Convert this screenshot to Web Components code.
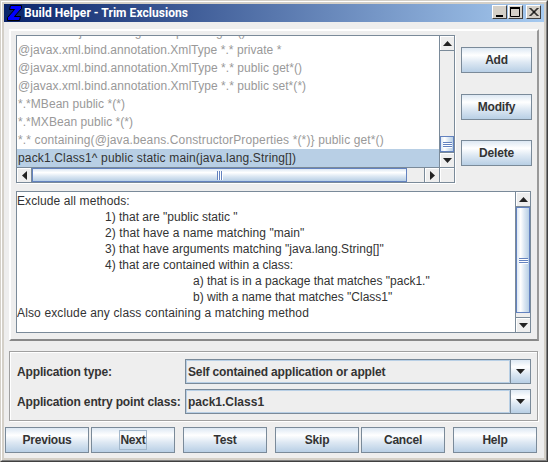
<!DOCTYPE html>
<html>
<head>
<meta charset="utf-8">
<title>Build Helper - Trim Exclusions</title>
<style>
html, body { margin: 0; padding: 0; background: #d4d0c8; }
</style>
</head>
<body>
<app-window>
  <title-bar slot="title">Build Helper - Trim Exclusions</title-bar>

  <upper-panel>
    <list-pane slot="list">
      <list-row dim>*.* extends javax.swing.JComponent get*()</list-row>
      <list-row dim style="letter-spacing:.05px">@javax.xml.bind.annotation.XmlType *.* private *</list-row>
      <list-row dim style="letter-spacing:.06px">@javax.xml.bind.annotation.XmlType *.* public get*()</list-row>
      <list-row dim style="letter-spacing:.06px">@javax.xml.bind.annotation.XmlType *.* public set*(*)</list-row>
      <list-row dim style="letter-spacing:.05px">*.*MBean public *(*)</list-row>
      <list-row dim style="letter-spacing:.05px">*.*MXBean public *(*)</list-row>
      <list-row dim style="letter-spacing:.13px">*.* containing(@java.beans.ConstructorProperties *(*)} public get*()</list-row>
      <list-row selected style="letter-spacing:.15px">pack1.Class1^ public static main(java.lang.String[])</list-row>
    </list-pane>
    <metal-button slot="side" style="margin-top:12px">Add</metal-button>
    <metal-button slot="side" style="margin-top:21px">Modify</metal-button>
    <metal-button slot="side" style="margin-top:20px">Delete</metal-button>
    <text-pane slot="text">
      <text-line style="letter-spacing:.1px">Exclude all methods:</text-line>
      <text-line indent="1">1) that are "public static "</text-line>
      <text-line indent="1" style="letter-spacing:.08px">2) that have a name matching "main"</text-line>
      <text-line indent="1" style="letter-spacing:.04px">3) that have arguments matching "java.lang.String[]"</text-line>
      <text-line indent="1">4) that are contained within a class:</text-line>
      <text-line indent="2">a) that is in a package that matches "pack1."</text-line>
      <text-line indent="2">b) with a name that matches "Class1"</text-line>
      <text-line style="letter-spacing:.14px">Also exclude any class containing a matching method</text-line>
    </text-pane>
  </upper-panel>

  <lower-panel>
    <span slot="l1">Application type:</span>
    <combo-box slot="c1">Self contained application or applet</combo-box>
    <span slot="l2">Application entry point class:</span>
    <combo-box slot="c2" style="letter-spacing:0">pack1.Class1</combo-box>
  </lower-panel>

  <button-row>
    <metal-button wide>Previous</metal-button>
    <metal-button wide focused style="margin-left:2px">Next</metal-button>
    <metal-button wide style="margin-left:8px">Test</metal-button>
    <metal-button wide style="margin-left:8px">Skip</metal-button>
    <metal-button wide style="margin-left:2px">Cancel</metal-button>
    <metal-button wide style="margin-left:8px">Help</metal-button>
  </button-row>
</app-window>

<script>
const FONT = '"Liberation Sans", Arial, sans-serif';

function makeEl(name, html) {
  var t = document.createElement("template");
  t.innerHTML = html;
  customElements.define(name, class extends HTMLElement {
    constructor() {
      super();
      this.attachShadow({ mode: "open" });
      this.shadowRoot.appendChild(t.content.cloneNode(true));
    }
  });
}

//outer frame
makeEl("app-window", `
<style>
:host { display: block; width: 548px; height: 462px; box-sizing: border-box; font-family: ${FONT}; font-size: 12px; color: #333;
  border: 1px solid; border-color: #d4d0c8 #404040 #404040 #d4d0c8; overflow: hidden; }
.in { height: 100%; box-sizing: border-box; border: 1px solid; border-color: #fff #808080 #808080 #fff; padding: 2px; background: #d4d0c8; display: flex; flex-direction: column; }
.body { flex: 1; background: #eee; display: flex; flex-direction: column; }
</style>
<div class="in"><slot name="title"></slot><div class="body"><slot></slot></div></div>`);

//title bar with logo and window buttons
makeEl("title-bar", `
<style>
:host { display: flex; align-items: center; height: 18px; flex: none; background: linear-gradient(90deg, #0a246a, #a6caf0); color: #fff; font: bold 12px Roboto, sans-serif; letter-spacing: .05px; }
svg.logo { margin: 0 2px 0 3px; flex: none; }
.t { flex: 1; white-space: nowrap; }
.b { width: 15px; height: 14px; box-sizing: border-box; background: #d4d0c8; border: 1px solid; border-color: #fff #404040 #404040 #fff; display: flex; flex: none; margin-top: -2px; }
.b svg { display: block; }
</style>
<svg class="logo" width="15" height="16" viewBox="0 0 15 16"><path d="M3.500 .5H14.500V3.500L7.500 11.500H13.500L12.500 15.500H.5V12.500L7.500 4.500H2.500Z" fill="#0000ff" stroke="#000"/></svg>
<span class="t"><slot></slot></span>
<span class="b"><svg width="13" height="12"><rect x="3" y="9" width="7" height="2" fill="#000"/></svg></span>
<span class="b" style="margin-left:1px"><svg width="13" height="12"><path d="M1.500 1.500H10.500V10.500H1.500Z" fill="none" stroke="#000"/><rect x="1" y="1" width="10" height="2" fill="#000"/></svg></span>
<span class="b" style="margin-left:3px;margin-right:3px"><svg width="13" height="12"><path d="M2.500 2L10.500 10M3.500 2L11.500 10M10.500 2L2.500 10M11.500 2L3.500 10" stroke="#000" fill="none"/></svg></span>`);

//raised panel holding list, side buttons and description
makeEl("upper-panel", `
<style>
:host { display: block; margin: 7px 0 0 5px; width: 530px; height: 312px; box-sizing: border-box; border: 2px solid; border-color: #fff #999 #888 #fff; padding: 4px 0 0 5px; }
.top { display: flex; }
.side { display: flex; flex-direction: column; margin-left: 6px; }
.text { margin-top: 8px; }
</style>
<div class="top"><slot name="list"></slot><div class="side"><slot name="side"></slot></div></div>
<div class="text"><slot name="text"></slot></div>`);

//Ocean style push button
makeEl("metal-button", `
<style>
:host { display: flex; align-items: center; justify-content: center; box-sizing: border-box; width: 71px; height: 26px; flex: none; border: 1px solid #7a8a99;
  background: linear-gradient(#dde8f3, #fff 30%, #dde8f3 60%, #b8cfe5); font: bold 12px ${FONT}; color: #333; letter-spacing: -.2px; }
:host([wide]) { width: 84px; }
span { padding: 2px 0; border: 1px solid transparent; line-height: 14px; }
:host([focused]) span { border-color: #a3b8cc; }
</style>
<span><slot></slot></span>`);

//scroll bar: sizes of the part before the thumb, and the thumb
class ScrollBar extends HTMLElement {
  constructor() {
    super();
    this.attachShadow({ mode: "open" });
  }
  connectedCallback() {
    var v = this.getAttribute("orient") == "v";
    var before = this.getAttribute("before");
    var size = this.getAttribute("size");
    this.shadowRoot.innerHTML = `
<style>
:host { display: flex; flex: none; box-sizing: border-box; flex-direction: ${v ? "column" : "row"}; background: #eee; ${v ? "width:15px" : "height:15px"}; }
.end { display: flex; align-items: center; justify-content: center; flex: none; box-sizing: border-box; ${v ? "height:15px" : "width:15px"}; background: #eee; box-shadow: inset 1px 1px #fff; }
.end svg { display: block; }
.a { ${v ? "border-bottom" : "border-right"}: 1px solid #7a8a99; }
.z { ${v ? "border-top" : "border-left"}: 1px solid #7a8a99; }
.gap1 { flex: none; ${v ? "height" : "width"}: ${before}px; }
.gap2 { flex: 1; }
.thumb { flex: none; box-sizing: border-box; ${v ? "height" : "width"}: ${size}px; border: 1px solid #6382bf; display: flex; align-items: center; justify-content: center; gap: 1px; flex-direction: ${v ? "column" : "row"};
  background: linear-gradient(${v ? "90deg, " : ""}#dde8f3, #fff 30%, #dde8f3 60%, #b8cfe5); }
i { display: block; flex: none; background: #6382bf; box-shadow: ${v ? "0 1px #fff" : "1px 0 #fff"}; ${v ? "width:9px;height:1px" : "width:1px;height:9px"}; }
</style>
<div class="end a"><svg width="9" height="9"><path d="${v ? "M4.500 2L9 7H0Z" : "M2 4.500L7 0V9Z"}" fill="#222"/></svg></div>
<div class="gap1"></div>
<div class="thumb"><i></i><i></i><i></i></div>
<div class="gap2"></div>
<div class="end z"><svg width="9" height="9"><path d="${v ? "M0 2H9L4.500 7Z" : "M2 0L7 4.500L2 9Z"}" fill="#222"/></svg></div>`;
  }
}
customElements.define("scroll-bar", ScrollBar);

//list with both scrollbars
makeEl("list-pane", `
<style>
:host { display: grid; grid-template-columns: 422px 15px; grid-template-rows: 131px 15px; flex: none; width: 439px; height: 148px; box-sizing: border-box; border: 1px solid #7a8a99; box-shadow: 1px 1px 0 #fff; background: #eee; }
.rows { background: #fff; overflow: hidden; display: flex; flex-direction: column; justify-content: flex-end; }
.corner { background: #eee; border-left: 1px solid #7a8a99; border-top: 1px solid #7a8a99; box-sizing: border-box; box-shadow: inset 1px 1px #fff; }
scroll-bar[orient=v] { border-left: 1px solid #7a8a99; width: 15px; height: 131px; }
scroll-bar[orient=h] { border-top: 1px solid #7a8a99; height: 15px; width: 422px; }
</style>
<div class="rows"><slot></slot></div>
<scroll-bar orient="v" before="85" size="16"></scroll-bar>
<scroll-bar orient="h" before="0" size="375"></scroll-bar>
<div class="corner"></div>`);

makeEl("list-row", `
<style>
:host { display: block; flex: none; height: 18px; line-height: 18px; padding-left: 1px; font-size: 12px; white-space: nowrap; color: #333; }
:host([dim]) { color: #999; }
:host([selected]) { background: #b8cfe5; }
</style>
<slot></slot>`);

//description text with a scrollbar
makeEl("text-pane", `
<style>
:host { display: flex; width: 515px; height: 142px; box-sizing: border-box; border: 1px solid #7a8a99; background: #fff; }
.t { flex: 1; padding: 1px 0 0 0; overflow: hidden; }
scroll-bar { border-left: 1px solid #7a8a99; height: 140px; }
</style>
<div class="t"><slot></slot></div>
<scroll-bar orient="v" before="0" size="106"></scroll-bar>`);

makeEl("text-line", `
<style>
:host { display: block; height: 16px; line-height: 16px; font-size: 12px; color: #333; white-space: nowrap; }
:host([indent="1"]) { padding-left: 88px; }
:host([indent="2"]) { padding-left: 176px; }
</style>
<slot></slot>`);

//etched panel with the two combos
makeEl("lower-panel", `
<style>
:host { display: grid; grid-template-columns: 168px 346px; grid-template-rows: 25px 25px; row-gap: 5px; align-items: center; margin: 10px 0 0 5px; width: 529px; height: 70px; box-sizing: border-box; border: 1px solid #a0a0a0; box-shadow: inset 1px 1px #fff, 1px 1px #fff; padding: 7px 0 0 7px; font: bold 12px ${FONT}; color: #333; white-space: nowrap; letter-spacing: -.15px; }
</style>
<slot name="l1"></slot><slot name="c1"></slot><slot name="l2"></slot><slot name="c2"></slot>`);

makeEl("combo-box", `
<style>
:host { display: flex; height: 25px; box-sizing: border-box; border: 1px solid #7a8a99; background: #eee; font: bold 12px ${FONT}; color: #333; }
.v { flex: 1; display: flex; align-items: center; padding-left: 1px; border: 1px solid #b8cfe5; white-space: nowrap; }
.b { flex: none; width: 20px; box-sizing: border-box; border-left: 1px solid #7a8a99; display: flex; align-items: center; justify-content: center; background: linear-gradient(#dde8f3, #fff 30%, #dde8f3 60%, #b8cfe5); }
</style>
<div class="v"><slot></slot></div>
<div class="b"><svg width="9" height="5"><path d="M0 0H9L4.500 5Z" fill="#222"/></svg></div>`);

makeEl("button-row", `
<style>
:host { display: flex; margin: 6px 0 0 1px; }
</style>
<slot></slot>`);
</script>
</body>
</html>
